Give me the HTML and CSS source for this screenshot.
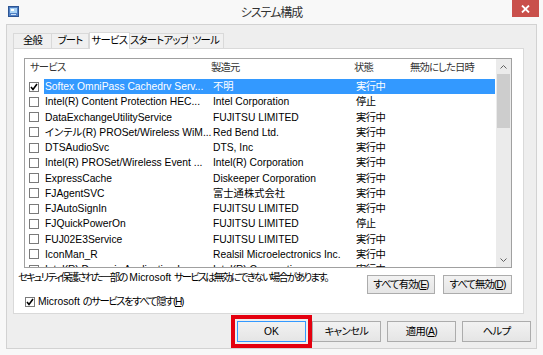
FILE: index.html
```html
<!DOCTYPE html>
<html lang="ja">
  <head>
    <meta charset="UTF-8" />
    <title>システム構成</title>
    <link rel="stylesheet" href="styles.css">
  </head>
  <body>
    <div class="window">
      <div class="titlebar">
        <svg class="app-icon" width="11" height="11" viewBox="0 0 11 11">
          <rect x="0.5" y="0.5" width="10" height="10" fill="#4f7fc4" stroke="#2d5593" />
          <rect x="2" y="2" width="7" height="5" fill="#a9d3f5" />
          <rect x="3" y="3" width="3" height="2" fill="#ffffff" />
          <rect x="3" y="8" width="5" height="1" fill="#cfe3f7" />
        </svg>
        <div class="title">システム構成</div>
        <div class="close">
          <svg width="9" height="8" viewBox="0 0 9 8">
            <path d="M1 0.5 L8 7.5 M8 0.5 L1 7.5" stroke="#ffffff" stroke-width="1.8" />
          </svg>
        </div>
      </div>

      <div class="client">
        <div class="tabs">
          <div class="tab t1">全般</div>
          <div class="tab t2">ブート</div>
          <div class="tab t3 active">サービス</div>
          <div class="tab t4">スタートアップ</div>
          <div class="tab t5">ツール</div>
        </div>

        <div class="panel">
          <div class="listbox">
            <div class="list">
              <div class="list-head">
                <div class="head-cell first">サービス</div>
                <div class="head-cell">製造元</div>
                <div class="head-cell">状態</div>
                <div class="head-cell">無効にした日時</div>
              </div>
              <div class="rows" id="rows"></div>
            </div>
            <div class="scrollbar">
              <div class="arrow">
                <svg width="7" height="4" viewBox="0 0 7 4"><path d="M0.5 3.5 L3.5 0.5 L6.5 3.5" fill="none" stroke="#606060" /></svg>
              </div>
              <div class="track">
                <div class="thumb"></div>
              </div>
              <div class="arrow">
                <svg width="7" height="4" viewBox="0 0 7 4"><path d="M0.5 0.5 L3.5 3.5 L6.5 0.5" fill="none" stroke="#606060" /></svg>
              </div>
            </div>
          </div>

          <div class="note-row">
            <span class="note">セキュリティ保護された一部の<span class="lat"> Microsoft </span>サービスは無効にできない場合があります。</span>
            <button class="btn small">すべて有効(<u>E</u>)</button>
            <button class="btn small">すべて無効(<u>D</u>)</button>
          </div>

          <label class="hide-ms">
            <span class="cb checked">
              <svg width="8" height="8" viewBox="0 0 8 8"><path d="M1 4 L3 6.5 L7 1" fill="none" stroke="#000" stroke-width="1.6" /></svg>
            </span>
            <span><span class="lat">Microsoft </span>のサービスをすべて隠す(<u>H</u>)</span>
          </label>
        </div>

        <div class="dialog-buttons">
          <button class="btn big default">OK</button>
          <button class="btn big">キャンセル</button>
          <button class="btn big">適用(<u>A</u>)</button>
          <button class="btn big">ヘルプ</button>
        </div>
      </div>
    </div>

    <script>
      const services = [
        ["Softex OmniPass Cachedrv Serv...", "不明", "実行中", true],
        ["Intel(R) Content Protection HEC...", "Intel Corporation", "停止"],
        ["DataExchangeUtilityService", "FUJITSU LIMITED", "実行中"],
        ["インテル(R) PROSet/Wireless WiM...", "Red Bend Ltd.", "実行中"],
        ["DTSAudioSvc", "DTS, Inc", "実行中"],
        ["Intel(R) PROSet/Wireless Event ...", "Intel(R) Corporation", "実行中"],
        ["ExpressCache", "Diskeeper Corporation", "実行中"],
        ["FJAgentSVC", "富士通株式会社", "実行中"],
        ["FJAutoSignIn", "FUJITSU LIMITED", "実行中"],
        ["FJQuickPowerOn", "FUJITSU LIMITED", "停止"],
        ["FUJ02E3Service", "FUJITSU LIMITED", "実行中"],
        ["IconMan_R", "Realsil Microelectronics Inc.", "実行中"],
        ["Intel(R) Dynamic Application Lo...", "Intel(R) Corporation", "実行中"]
      ];

      const check = '<svg width="8" height="8" viewBox="0 0 8 8"><path d="M1 4 L3 6.5 L7 1" fill="none" stroke="#000" stroke-width="1.6" /></svg>';
      const rows = document.getElementById("rows");
      services.forEach((s) => {
        const row = document.createElement("div");
        row.className = "row";
        row.innerHTML =
          '<span class="cb' + (s[3] ? ' checked">' + check : '">') + '</span>' +
          '<div class="cells' + (s[3] ? ' selected' : '') + '">' +
          '<span>' + s[0] + '</span><span>' + s[1] + '</span><span class="jp">' + s[2] + '</span><span></span>' +
          '</div>';
        rows.appendChild(row);
      });
    </script>
  </body>
</html>
```

FILE: styles.css
```css
body {
  margin: 0;
  background: #f8f8f8;
  font-family: "Liberation Sans", "Noto Sans CJK JP", sans-serif;
  font-size: 10.3px;
  font-feature-settings: "palt" 1;
  color: #000;
}

.window {
  width: 543px;
  height: 355px;
  display: flex;
  flex-direction: column;
  overflow: hidden;
}

.titlebar {
  height: 24px;
  display: flex;
  align-items: flex-start;
}

.app-icon {
  margin: 6px 0 0 8px;
}

.title {
  flex: 1;
  text-align: center;
  font-size: 12px;
  letter-spacing: -1px;
  line-height: 14px;
  margin-top: 6px;
  color: #333;
  padding-left: 12px;
}

.close {
  width: 27px;
  height: 17px;
  margin-right: 4px;
  background: #c9504b;
  display: flex;
  justify-content: center;
  align-items: center;
}

.client {
  flex: 1;
  margin: 0 6px 6px 6px;
  border: 1px solid #d2d2d2;
  background: #eeeeee;
  padding: 6px 5px 6px 6px;
  display: flex;
  flex-direction: column;
}

.tabs {
  display: flex;
  align-items: flex-end;
  height: 17px;
}

.tab {
  box-sizing: border-box;
  height: 15px;
  border: 1px solid #d9d9d9;
  border-bottom: none;
  background: #f0f0f0;
  text-align: center;
  line-height: 14px;
  letter-spacing: -0.7px;
  white-space: nowrap;
}

.tab.active {
  height: 17px;
  background: #fff;
  margin-bottom: -1px;
  line-height: 15px;
  position: relative;
  z-index: 1;
}

.t1 { width: 39px; }
.t2 { width: 37px; border-left: none; }
.t3 { width: 41px; }
.t4 { width: 58px; border-left: none; }
.t5 { width: 36px; border-left: none; }

.panel {
  box-sizing: border-box;
  height: 266px;
  margin-right: 7px;
  border: 1px solid #d9d9d9;
  background: #fff;
  padding: 9px 11px 0 4px;
}

.listbox {
  box-sizing: border-box;
  height: 210px;
  margin-left: 6px;
  border: 1px solid #a0a0a0;
  display: flex;
  overflow: hidden;
}

.list {
  flex: 1;
  overflow: hidden;
}

.list-head {
  display: grid;
  grid-template-columns: 186px 143px 56px 1fr;
  height: 20px;
  line-height: 18px;
  color: #333;
  letter-spacing: -0.8px;
}

.head-cell.first {
  padding-left: 5px;
}

.row {
  display: flex;
  align-items: center;
  height: 15.25px;
}

.cb {
  box-sizing: border-box;
  width: 10px;
  height: 10px;
  border: 1px solid #7a7a7a;
  background: #fff;
  margin: 0 4px 0 4px;
  display: flex;
  justify-content: center;
  align-items: center;
  flex-shrink: 0;
}

.cells {
  flex: 1;
  display: grid;
  grid-template-columns: 168px 143px 56px 1fr;
  height: 15.25px;
  line-height: 15px;
  margin-left: 1px;
}

.cells span {
  padding-left: 1px;
  white-space: nowrap;
  overflow: hidden;
}

.cells .jp {
  letter-spacing: -0.6px;
}

.cells.selected {
  background: #3399ff;
  color: #fff;
}

.scrollbar {
  width: 15px;
  margin-left: 1px;
  background: #ebebeb;
  display: flex;
  flex-direction: column;
}

.arrow {
  height: 15px;
  display: flex;
  justify-content: center;
  align-items: center;
}

.track {
  flex: 1;
}

.thumb {
  height: 54px;
  margin: 0 1px;
  background: #cdcdcd;
}

.note-row {
  display: flex;
  align-items: flex-start;
  margin-top: 3px;
  height: 24px;
}

.note {
  flex: 1;
  line-height: 14px;
  white-space: nowrap;
  letter-spacing: -1.8px;
  overflow: hidden;
}

.lat {
  letter-spacing: 0;
}

.btn {
  box-sizing: border-box;
  font-family: inherit;
  font-size: 10.3px;
  letter-spacing: -0.9px;
  font-feature-settings: "palt" 1;
  color: #000;
  border: 1px solid #acacac;
  background: linear-gradient(#f2f2f2, #e5e5e5);
  padding: 0;
  line-height: 16px;
  white-space: nowrap;
}

.btn.small {
  height: 19px;
  margin-top: 4px;
  width: 68px;
}

.btn.small + .btn.small {
  margin-left: 8px;
  width: 69px;
}

.hide-ms {
  display: flex;
  align-items: center;
  margin-left: 7px;
  line-height: 14px;
  height: 14px;
  letter-spacing: -1.4px;
}

.hide-ms .cb {
  margin: 0 3px 0 0;
}

.dialog-buttons {
  display: flex;
  justify-content: flex-end;
  gap: 6px;
  margin-top: 7px;
}

.btn.big {
  width: 69px;
  height: 21px;
  letter-spacing: -0.6px;
}

.btn.default {
  border-color: #3399ff;
  letter-spacing: 0;
  outline: 4px solid #e4000f;
  outline-offset: 2px;
}
```
